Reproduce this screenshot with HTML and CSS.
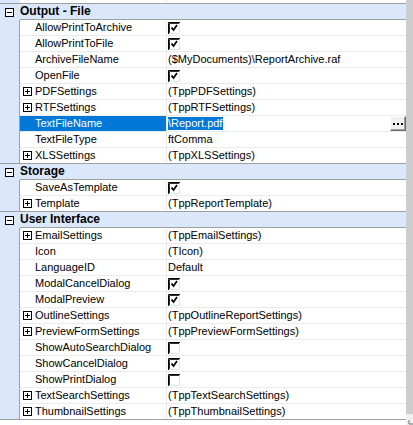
FILE: index.html
```html
<!DOCTYPE html>
<html lang="en">
<head>
    <meta charset="UTF-8">
    <title>Report Properties</title>
    <link rel="stylesheet" href="styles.css">
</head>
<body>
    <svg class="defs" width="0" height="0">
        <symbol id="plus" viewBox="0 0 9 9">
            <rect x="0.5" y="0.5" width="8" height="8" fill="#fff" stroke="#000"/>
            <path d="M2 4.5h5M4.5 2v5" stroke="#000"/>
        </symbol>
        <symbol id="minus" viewBox="0 0 9 9">
            <rect x="0.5" y="0.5" width="8" height="8" fill="#fff" stroke="#000"/>
            <path d="M2 4.5h5" stroke="#000"/>
        </symbol>
        <symbol id="box" viewBox="0 0 12 12">
            <path d="M0.5 12V0.5H12" stroke="#000" fill="none"/>
            <path d="M1.5 11V1.5H11" stroke="#303030" fill="none"/>
            <path d="M1 11.5H11.5V1" stroke="#e4e4e4" fill="none"/>
        </symbol>
        <symbol id="check" viewBox="0 0 12 12">
            <use href="#box"/>
            <path d="M3.5 5.5l2 2.5 3.5-5" stroke="#000" stroke-width="1.7" fill="none"/>
        </symbol>
    </svg>

    <div class="window">
        <div class="list">
            <div class="row partial">
                <div class="gutter"></div>
                <div class="name"></div>
                <div class="value"></div>
            </div>

            <div class="group">
                <div class="group-head">
                    <div class="head-gutter"><svg class="exp"><use href="#minus"/></svg></div>
                    <div class="head-title">Output - File</div>
                </div>
                <div class="row"><div class="gutter"></div><div class="name">AllowPrintToArchive</div><div class="value"><svg class="chk"><use href="#check"/></svg></div></div>
                <div class="row"><div class="gutter"></div><div class="name">AllowPrintToFile</div><div class="value"><svg class="chk"><use href="#check"/></svg></div></div>
                <div class="row"><div class="gutter"></div><div class="name">ArchiveFileName</div><div class="value">($MyDocuments)\ReportArchive.raf</div></div>
                <div class="row"><div class="gutter"></div><div class="name">OpenFile</div><div class="value"><svg class="chk"><use href="#check"/></svg></div></div>
                <div class="row"><div class="gutter"></div><div class="name sub"><svg class="exp"><use href="#plus"/></svg>PDFSettings</div><div class="value">(TppPDFSettings)</div></div>
                <div class="row"><div class="gutter"></div><div class="name sub"><svg class="exp"><use href="#plus"/></svg>RTFSettings</div><div class="value">(TppRTFSettings)</div></div>
                <div class="row selected">
                    <div class="gutter"></div>
                    <div class="name">TextFileName</div>
                    <div class="value editor">
                        <span class="sel-text">\Report.pdf</span>
                        <button class="ellipsis"><i></i><i></i><i></i></button>
                    </div>
                </div>
                <div class="row"><div class="gutter"></div><div class="name">TextFileType</div><div class="value">ftComma</div></div>
                <div class="row"><div class="gutter"></div><div class="name sub"><svg class="exp"><use href="#plus"/></svg>XLSSettings</div><div class="value">(TppXLSSettings)</div></div>
            </div>

            <div class="group">
                <div class="group-head">
                    <div class="head-gutter"><svg class="exp"><use href="#minus"/></svg></div>
                    <div class="head-title">Storage</div>
                </div>
                <div class="row"><div class="gutter"></div><div class="name">SaveAsTemplate</div><div class="value"><svg class="chk"><use href="#check"/></svg></div></div>
                <div class="row"><div class="gutter"></div><div class="name sub"><svg class="exp"><use href="#plus"/></svg>Template</div><div class="value">(TppReportTemplate)</div></div>
            </div>

            <div class="group last">
                <div class="group-head">
                    <div class="head-gutter"><svg class="exp"><use href="#minus"/></svg></div>
                    <div class="head-title">User Interface</div>
                </div>
                <div class="row"><div class="gutter"></div><div class="name sub"><svg class="exp"><use href="#plus"/></svg>EmailSettings</div><div class="value">(TppEmailSettings)</div></div>
                <div class="row"><div class="gutter"></div><div class="name">Icon</div><div class="value">(TIcon)</div></div>
                <div class="row"><div class="gutter"></div><div class="name">LanguageID</div><div class="value">Default</div></div>
                <div class="row"><div class="gutter"></div><div class="name">ModalCancelDialog</div><div class="value"><svg class="chk"><use href="#check"/></svg></div></div>
                <div class="row"><div class="gutter"></div><div class="name">ModalPreview</div><div class="value"><svg class="chk"><use href="#check"/></svg></div></div>
                <div class="row"><div class="gutter"></div><div class="name sub"><svg class="exp"><use href="#plus"/></svg>OutlineSettings</div><div class="value">(TppOutlineReportSettings)</div></div>
                <div class="row"><div class="gutter"></div><div class="name sub"><svg class="exp"><use href="#plus"/></svg>PreviewFormSettings</div><div class="value">(TppPreviewFormSettings)</div></div>
                <div class="row"><div class="gutter"></div><div class="name">ShowAutoSearchDialog</div><div class="value"><svg class="chk"><use href="#box"/></svg></div></div>
                <div class="row"><div class="gutter"></div><div class="name">ShowCancelDialog</div><div class="value"><svg class="chk"><use href="#check"/></svg></div></div>
                <div class="row"><div class="gutter"></div><div class="name">ShowPrintDialog</div><div class="value"><svg class="chk"><use href="#box"/></svg></div></div>
                <div class="row"><div class="gutter"></div><div class="name sub"><svg class="exp"><use href="#plus"/></svg>TextSearchSettings</div><div class="value">(TppTextSearchSettings)</div></div>
                <div class="row"><div class="gutter"></div><div class="name sub"><svg class="exp"><use href="#plus"/></svg>ThumbnailSettings</div><div class="value">(TppThumbnailSettings)</div></div>
            </div>
        </div>

        <div class="side">
            <div class="vscroll"></div>
            <div class="corner">
                <svg class="grip" width="5" height="5" viewBox="0 0 5 5">
                    <path d="M1 0v4h4" stroke="#707070" fill="none"/>
                </svg>
            </div>
        </div>
    </div>
</body>
</html>
```

FILE: styles.css
```css
* {
    box-sizing: border-box;
}
body {
    margin: 0;
    background-color: #fff;
    font-family: "Liberation Sans", Arial, sans-serif;
    font-size: 11px;
    color: #000;
}
.defs {
    position: absolute;
}
.window {
    display: flex;
    width: 413px;
    height: 425px;
}
.list {
    width: 406px;
    border-bottom: 1px solid #a0a0a0;
    align-self: flex-start;
}
.side {
    width: 7px;
    display: flex;
    flex-direction: column;
}
.vscroll {
    height: 414px;
    background-color: #cdcdcd;
}
.corner {
    flex: 1;
    background-color: #f0f0f0;
    display: flex;
    align-items: flex-end;
    justify-content: flex-end;
}
.grip {
    display: block;
}

/* rows */
.row {
    display: grid;
    grid-template-columns: 20px 147px 1fr;
}
.gutter {
    background-color: #dbe7fa;
    border-right: 1px solid #a0a0a0;
}
.name, .value {
    height: 16px;
    line-height: 15px;
    border-bottom: 1px solid #ebebeb;
    white-space: nowrap;
    overflow: hidden;
}
.row:last-child .name,
.row:last-child .value {
    height: 15px;
    border-bottom: none;
}
.name {
    padding-left: 15px;
    border-right: 1px solid #ebebeb;
}
.name.sub {
    padding-left: 3px;
    display: flex;
    align-items: center;
}
.value {
    padding-left: 1px;
    display: flex;
    align-items: center;
}
.row.partial .name,
.row.partial .value {
    height: 3px;
    border-bottom: none;
}
.row.partial .gutter {
    border-right: none;
}

.exp {
    width: 9px;
    height: 9px;
    margin-right: 3px;
    flex-shrink: 0;
}
.chk {
    width: 12px;
    height: 12px;
}

/* group headers */
.group-head {
    display: grid;
    grid-template-columns: 20px 1fr;
    background-color: #dbe7fa;
    border-top: 1px solid #a0a0a0;
}
.head-gutter {
    padding-left: 5px;
    display: flex;
    align-items: center;
}
.head-gutter .exp {
    margin-right: 0;
}
.head-title {
    height: 16px;
    line-height: 15px;
    font-weight: bold;
    font-size: 12px;
    border-bottom: 1px solid #a0a0a0;
}

/* selected row with in-place editor */
.selected .name {
    background-color: #0078d7;
    color: #fff;
}
.editor {
    padding-left: 1px;
}
.sel-text {
    background-color: #0078d7;
    color: #fff;
    line-height: 13px;
    padding-right: 1px;
}
.ellipsis {
    margin-left: auto;
    width: 16px;
    height: 15px;
    padding: 0;
    background-color: #f0f0f0;
    border: 1px solid;
    border-color: #fff #696969 #696969 #fff;
    box-shadow: inset -1px -1px 0 #a0a0a0;
    display: flex;
    align-items: center;
    justify-content: center;
    gap: 2px;
}
.ellipsis i {
    width: 2px;
    height: 2px;
    background-color: #000;
}
```
